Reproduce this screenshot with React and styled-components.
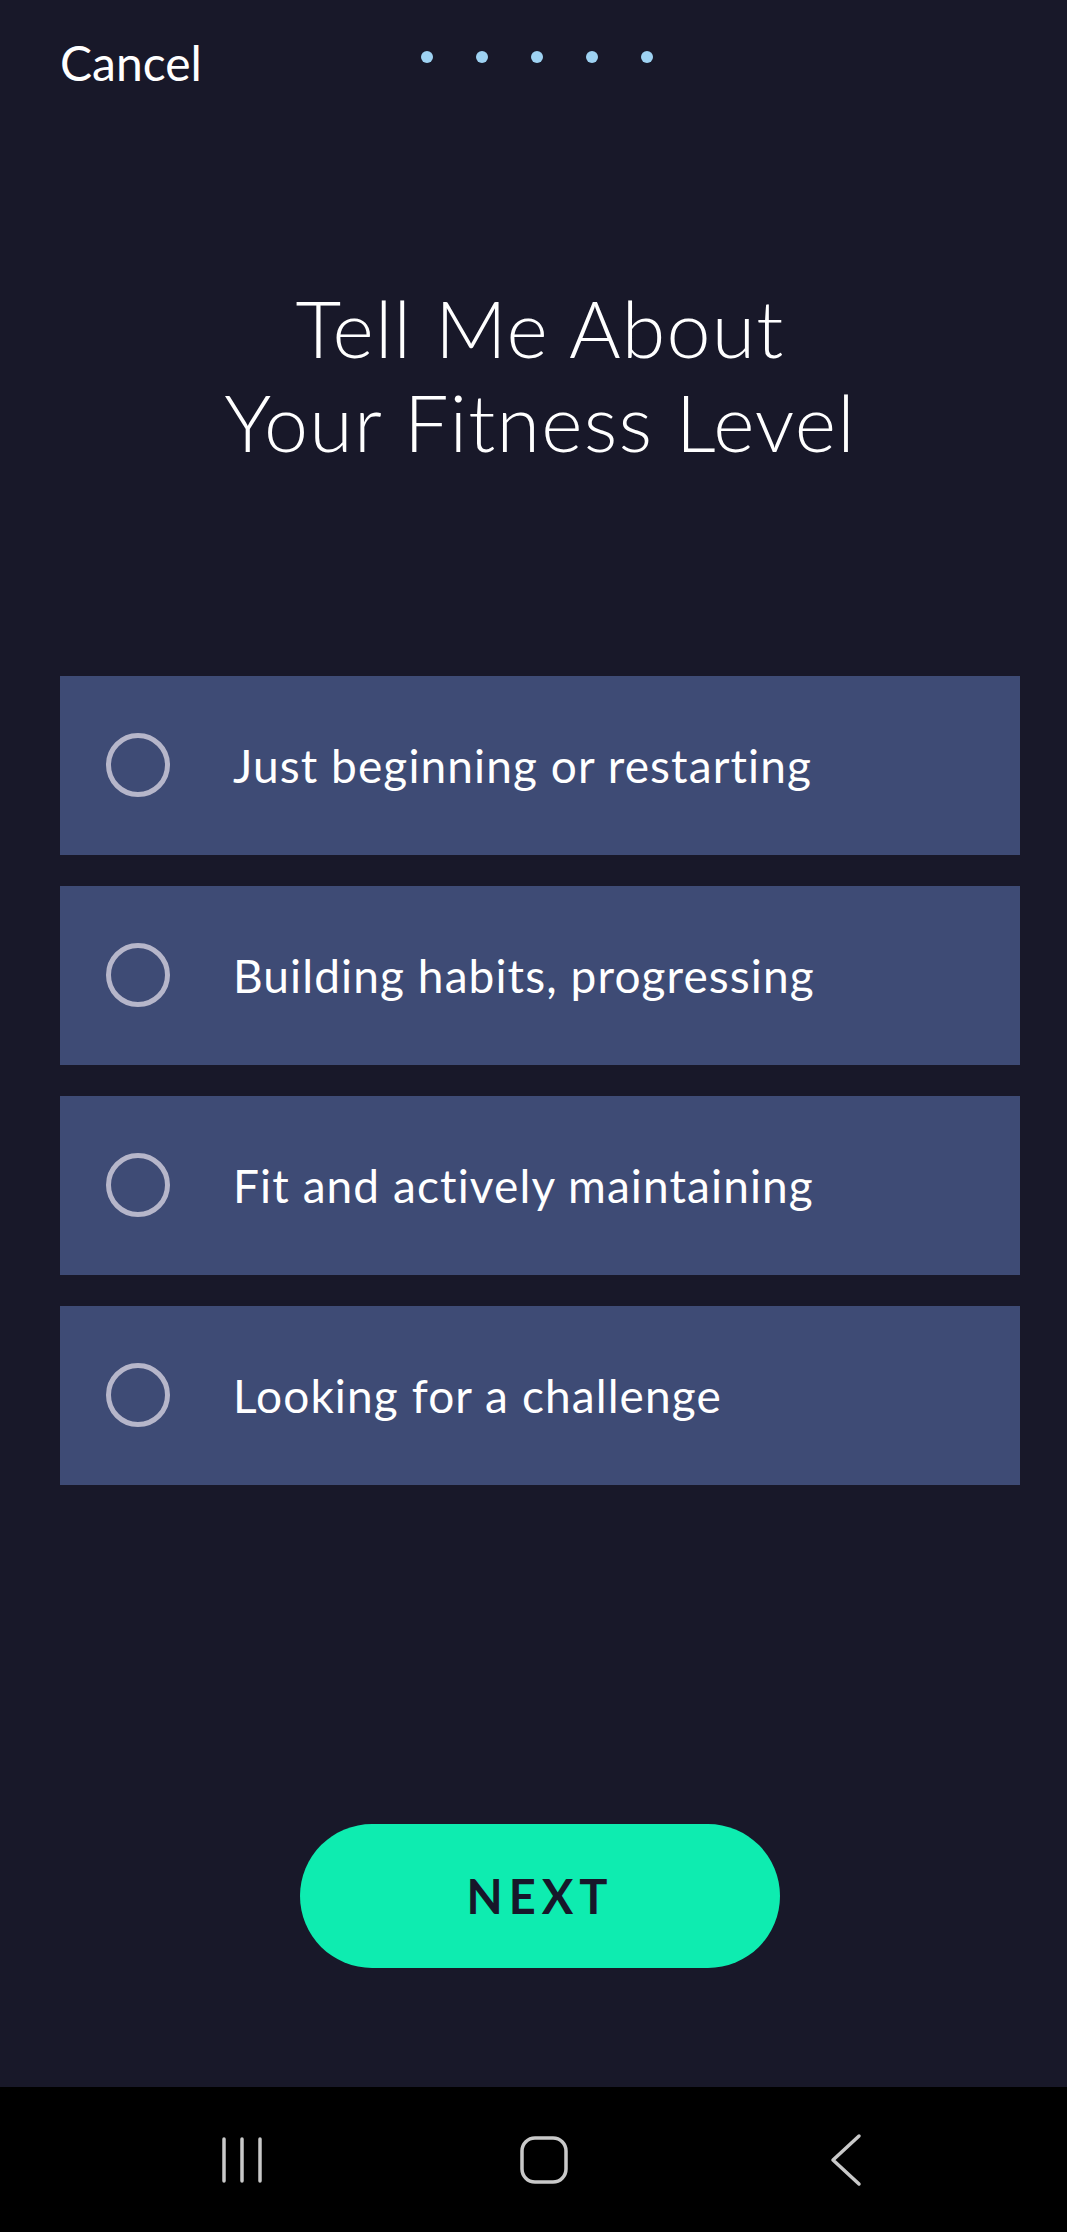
import React from 'react';
import styled, { createGlobalStyle } from 'styled-components';

const GlobalStyle = createGlobalStyle`
  html, body {
    margin: 0;
    padding: 0;
    background: #181829;
  }
  body {
    font-family: Lato, "Open Sans", sans-serif;
    color: #ffffff;
  }
`;

const Screen = styled.div`
  width: 1067px;
  min-height: 2232px;
  display: flex;
  flex-direction: column;
  background: #181829;
`;

const Main = styled.main`
  flex: 1;
  display: flex;
  flex-direction: column;
  padding: 34px 47px 119px 60px;
`;

const Header = styled.header`
  display: grid;
  grid-template-columns: 1fr auto 1fr;
  align-items: start;
`;

const CancelButton = styled.button`
  justify-self: start;
  background: none;
  border: none;
  padding: 0;
  font-family: Lato, sans-serif;
  font-size: 48px;
  line-height: 1.2;
  color: #ffffff;
  cursor: pointer;
`;

const Dots = styled.div`
  display: flex;
  gap: 43px;
  margin: 17px 6px 0 0;
`;

const Dot = styled.span`
  width: 12px;
  height: 12px;
  border-radius: 50%;
  background: #9ed2f2;
`;

const Title = styled.h1`
  margin: 189px 0 0;
  font-family: Lato, sans-serif;
  font-weight: 300;
  font-size: 79px;
  letter-spacing: 1.2px;
  line-height: 94px;
  text-align: center;
  color: #ffffff;
`;

const Options = styled.div`
  display: flex;
  flex-direction: column;
  gap: 31px;
  margin-top: 207px;
`;

const Option = styled.label`
  height: 179px;
  display: flex;
  align-items: center;
  gap: 63px;
  padding-left: 46px;
  background: #3e4b75;
  cursor: pointer;
`;

const Radio = styled.span`
  box-sizing: border-box;
  width: 64px;
  height: 64px;
  border-radius: 50%;
  border: 5px solid #b6b6ca;
  flex-shrink: 0;
`;

const OptionText = styled.span`
  font-size: 46px;
  letter-spacing: 1.1px;
  color: #ffffff;
`;

const NextButton = styled.button`
  align-self: center;
  margin-top: auto;
  width: 480px;
  height: 144px;
  border: none;
  border-radius: 72px;
  background: #0eecb0;
  color: #17172a;
  font-family: Lato, sans-serif;
  font-weight: 700;
  font-size: 47px;
  letter-spacing: 6px;
  padding-left: 6px;
  cursor: pointer;
`;

const NavBar = styled.nav`
  height: 145px;
  background: #000000;
  display: flex;
  align-items: center;
  gap: 202px;
  padding-left: 192px;
`;

const NavSlot = styled.div`
  width: 100px;
  display: flex;
  justify-content: center;
`;

const options = [
  'Just beginning or restarting',
  'Building habits, progressing',
  'Fit and actively maintaining',
  'Looking for a challenge',
];

export default function App() {
  return (
    <Screen>
      <GlobalStyle />
      <Main>
        <Header>
          <CancelButton>Cancel</CancelButton>
          <Dots>
            {[0, 1, 2, 3, 4].map((i) => (
              <Dot key={i} />
            ))}
          </Dots>
        </Header>

        <Title>
          Tell Me About
          <br />
          Your Fitness Level
        </Title>

        <Options>
          {options.map((text) => (
            <Option key={text}>
              <Radio />
              <OptionText>{text}</OptionText>
            </Option>
          ))}
        </Options>

        <NextButton>NEXT</NextButton>
      </Main>

      <NavBar>
        <NavSlot>
          <svg width="44" height="50" viewBox="0 0 44 50" fill="none" stroke="#c9c9c9" strokeWidth="3.5" strokeLinecap="round">
            <line x1="4" y1="4" x2="4" y2="46" />
            <line x1="22" y1="4" x2="22" y2="46" />
            <line x1="40" y1="4" x2="40" y2="46" />
          </svg>
        </NavSlot>
        <NavSlot>
          <svg width="50" height="50" viewBox="0 0 50 50" fill="none" stroke="#c9c9c9" strokeWidth="3.5">
            <rect x="3" y="3" width="44" height="44" rx="13" />
          </svg>
        </NavSlot>
        <NavSlot>
          <svg width="32" height="54" viewBox="0 0 32 54" fill="none" stroke="#c9c9c9" strokeWidth="3.5" strokeLinecap="round" strokeLinejoin="round">
            <polyline points="29,3 3,27 29,51" />
          </svg>
        </NavSlot>
      </NavBar>
    </Screen>
  );
}
